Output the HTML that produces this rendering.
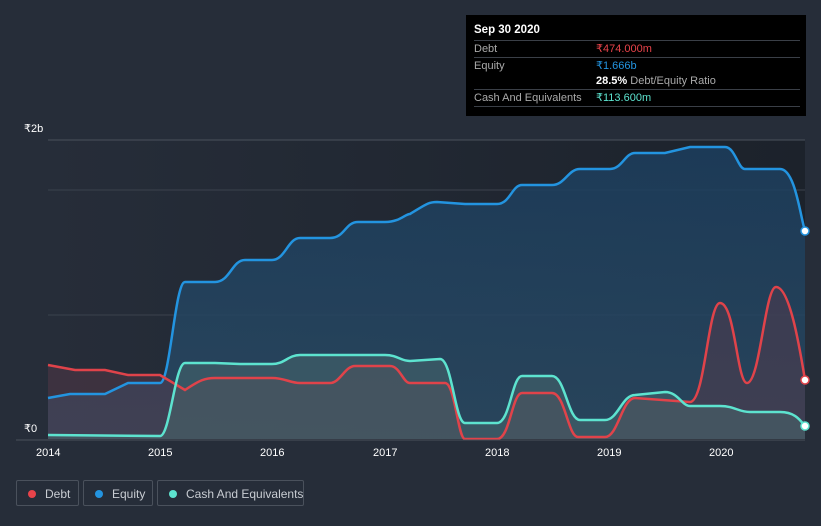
<!DOCTYPE html>
<html><head><style>
body{margin:0;width:821px;height:526px;background:#262d39;font-family:"Liberation Sans",sans-serif;overflow:hidden;position:relative}
.tt{position:absolute;left:466px;top:15px;width:340px;height:101px;background:#000;color:#fff;font-size:11px}
.tt .h{position:absolute;left:8px;top:9px;font-weight:bold;font-size:11.5px}
.row{position:absolute;left:8px;width:326px;border-top:1px solid #3a3f47;height:16px;line-height:16px;white-space:nowrap}
.row span.l{color:#aaa;position:absolute;left:0}
.row span.v{position:absolute;left:122px}
.lg{position:absolute;top:480px;height:26px;border:1px solid #4a515c;border-radius:2px;color:#c8ccd2;font-size:12px;line-height:26px;box-sizing:border-box;white-space:nowrap}
.lg i{position:absolute;left:11px;top:9px;width:8px;height:8px;border-radius:50%}
.lg b{font-weight:normal;position:absolute;left:28px}
.ax{position:absolute;color:#fff;font-size:11px}
</style></head><body>
<svg width="821" height="526" style="position:absolute;left:0;top:0">
<defs>
<linearGradient id="bg" x1="0" x2="1" y1="0" y2="0"><stop offset="0" stop-color="#262d39"/><stop offset="1" stop-color="#1c222b"/></linearGradient>
<linearGradient id="eq" x1="0" x2="0" y1="0" y2="1"><stop offset="0" stop-color="#1c3e5e"/><stop offset="1" stop-color="#2a4a63"/></linearGradient>
</defs>
<rect x="48" y="140" width="757" height="300" fill="url(#bg)"/>
<line x1="48" y1="140" x2="805" y2="140" stroke="#4a515c"/>
<line x1="48" y1="190" x2="805" y2="190" stroke="#3b424d"/>
<line x1="48" y1="315" x2="805" y2="315" stroke="#3b424d"/>
<path d="M48,398 L70,394 L105,394 L128,383 L160,383 C170,383 175,282 185,282 L215,282 C230,282 232,260 245,260 L272,260 C285,260 288,238 300,238 L330,238 C345,238 345,222 358,222 L385,222 C400,222 405,214 410,214 C425,205 428,202 437,202 L465,204 L497,204 C510,204 512,185 522,185 L552,185 C565,185 568,169 580,169 L610,169 C622,169 625,153 635,153 L665,153 L690,147 L725,147 C735,147 738,169 745,169 L780,169 C795,169 800,215 805,231 L805,439 L48,439Z" fill="url(#eq)" opacity="0.85"/>
<path d="M48,365 L75,370 L105,370 L128,375 L160,375 L185,390 C200,380 205,378 215,378 L272,378 C285,378 290,383 300,383 L330,383 C340,383 345,366 355,366 L390,366 C400,366 403,383 410,383 L445,383 C455,383 458,439 465,439 L497,439 C510,439 512,393 522,393 L552,393 C565,393 568,437 578,437 L605,437 C618,437 622,398 635,398 L690,402 C705,402 708,303 720,303 C735,303 737,383 747,383 C760,383 765,287 776,287 C790,287 800,350 805,380 L805,439 L48,439Z" fill="#5a3a4a" opacity="0.45"/>
<path d="M48,435 L160,436 C170,436 175,363 185,363 L215,363 L240,364 L272,364 C285,364 288,355 300,355 L385,355 C398,355 400,361 410,361 L440,359 C452,359 455,423 465,423 L497,423 C510,423 512,376 522,376 L552,376 C565,376 568,420 580,420 L605,420 C618,420 622,395 635,395 L665,392 C678,392 682,406 690,406 L720,406 C735,406 738,412 750,412 L780,412 C795,412 800,420 805,426 L805,439 L48,439Z" fill="#4a6a6e" opacity="0.5"/>
<path d="M48,398 L70,394 L105,394 L128,383 L160,383 C170,383 175,282 185,282 L215,282 C230,282 232,260 245,260 L272,260 C285,260 288,238 300,238 L330,238 C345,238 345,222 358,222 L385,222 C400,222 405,214 410,214 C425,205 428,202 437,202 L465,204 L497,204 C510,204 512,185 522,185 L552,185 C565,185 568,169 580,169 L610,169 C622,169 625,153 635,153 L665,153 L690,147 L725,147 C735,147 738,169 745,169 L780,169 C795,169 800,215 805,231" fill="none" stroke="#2394e0" stroke-width="2.5"/>
<path d="M48,365 L75,370 L105,370 L128,375 L160,375 L185,390 C200,380 205,378 215,378 L272,378 C285,378 290,383 300,383 L330,383 C340,383 345,366 355,366 L390,366 C400,366 403,383 410,383 L445,383 C455,383 458,439 465,439 L497,439 C510,439 512,393 522,393 L552,393 C565,393 568,437 578,437 L605,437 C618,437 622,398 635,398 L690,402 C705,402 708,303 720,303 C735,303 737,383 747,383 C760,383 765,287 776,287 C790,287 800,350 805,380" fill="none" stroke="#e0434a" stroke-width="2.5"/>
<path d="M48,435 L160,436 C170,436 175,363 185,363 L215,363 L240,364 L272,364 C285,364 288,355 300,355 L385,355 C398,355 400,361 410,361 L440,359 C452,359 455,423 465,423 L497,423 C510,423 512,376 522,376 L552,376 C565,376 568,420 580,420 L605,420 C618,420 622,395 635,395 L665,392 C678,392 682,406 690,406 L720,406 C735,406 738,412 750,412 L780,412 C795,412 800,420 805,426" fill="none" stroke="#5de3cf" stroke-width="2.5"/>
<line x1="16" y1="440" x2="805" y2="440" stroke="#4a515c"/>
<circle cx="805" cy="231" r="4" fill="#fff" stroke="#2394e0" stroke-width="1.5"/>
<circle cx="805" cy="380" r="4" fill="#fff" stroke="#e0434a" stroke-width="1.5"/>
<circle cx="805" cy="426" r="4" fill="#fff" stroke="#5de3cf" stroke-width="1.5"/>
</svg>
<div class="ax" style="left:24px;top:122px">₹2b</div>
<div class="ax" style="left:24px;top:422px">₹0</div>
<div class="ax" style="left:36px;top:447px">2014</div>
<div class="ax" style="left:148px;top:447px">2015</div>
<div class="ax" style="left:260px;top:447px">2016</div>
<div class="ax" style="left:373px;top:447px">2017</div>
<div class="ax" style="left:485px;top:447px">2018</div>
<div class="ax" style="left:597px;top:447px">2019</div>
<div class="ax" style="left:709px;top:447px">2020</div>
<div class="tt">
<div class="h">Sep 30 2020</div>
<div class="row" style="top:25px"><span class="l">Debt</span><span class="v" style="color:#e8434a">₹474.000m</span></div>
<div class="row" style="top:42px"><span class="l">Equity</span><span class="v" style="color:#2394e0">₹1.666b</span></div>
<div class="row" style="top:58px;border-top:none"><span class="v"><b>28.5%</b> <span style="color:#aaa">Debt/Equity Ratio</span></span></div>
<div class="row" style="top:74px;border-bottom:1px solid #3a3f47"><span class="l">Cash And Equivalents</span><span class="v" style="color:#5de3cf">₹113.600m</span></div>
</div>
<div class="lg" style="left:16px;width:63px"><i style="background:#e8434a"></i><b>Debt</b></div>
<div class="lg" style="left:83px;width:70px"><i style="background:#2394e0"></i><b>Equity</b></div>
<div class="lg" style="left:157px;width:147px"><i style="background:#5de3cf"></i><b>Cash And Equivalents</b></div>
</body></html>
